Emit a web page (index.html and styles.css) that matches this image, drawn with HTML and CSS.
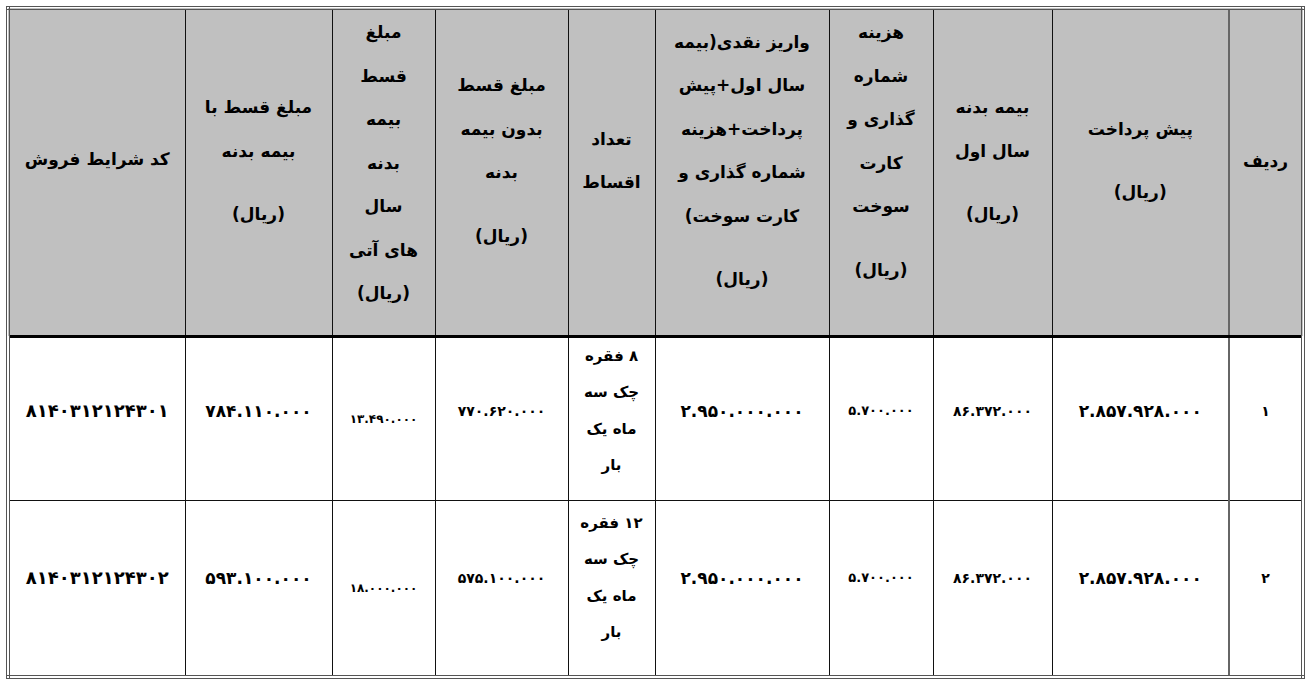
FILE: index.html
```html
<!DOCTYPE html>
<html lang="fa" dir="rtl">
<head>
<meta charset="utf-8">
<title>شرایط فروش</title>
<link rel="stylesheet" href="styles.css">
</head>
<body>
<table class="sales">
  <colgroup>
    <col class="c-radif">
    <col class="c-pish">
    <col class="c-bime">
    <col class="c-hazine">
    <col class="c-variz">
    <col class="c-tedad">
    <col class="c-bedun">
    <col class="c-ati">
    <col class="c-ba">
    <col class="c-kod">
  </colgroup>
  <thead>
    <tr class="head-row">
      <th class="radif">ردیف</th>
      <th>پیش پرداخت<span class="unit">(ریال)</span></th>
      <th>بیمه بدنه<br>سال اول<span class="unit">(ریال)</span></th>
      <th class="top">هزینه<br>شماره<br>گذاری و<br>کارت<br>سوخت<span class="unit">(ریال)</span></th>
      <th>واریز نقدی(بیمه<br>سال اول+پیش<br>پرداخت+هزینه<br>شماره گذاری و<br>کارت سوخت)<span class="unit">(ریال)</span></th>
      <th>تعداد<br>اقساط</th>
      <th>مبلغ قسط<br>بدون بیمه<br>بدنه<span class="unit">(ریال)</span></th>
      <th class="top">مبلغ<br>قسط<br>بیمه<br>بدنه<br>سال<br>های آتی<br>(ریال)</th>
      <th>مبلغ قسط با<br>بیمه بدنه<span class="unit">(ریال)</span></th>
      <th class="kod">کد شرایط فروش</th>
    </tr>
  </thead>
  <tbody>
    <tr class="row1">
      <td class="radif n-md">۱</td>
      <td class="n-lg">۲.۸۵۷.۹۲۸.۰۰۰</td>
      <td class="n-md">۸۶.۳۷۲.۰۰۰</td>
      <td class="n-sm">۵.۷۰۰.۰۰۰</td>
      <td class="n-lg">۲.۹۵۰.۰۰۰.۰۰۰</td>
      <td class="txt">۸ فقره<br>چک سه<br>ماه یک<br>بار</td>
      <td class="n-md">۷۷۰.۶۲۰.۰۰۰</td>
      <td class="n-xs">۱۳.۴۹۰.۰۰۰</td>
      <td class="n-lg">۷۸۴.۱۱۰.۰۰۰</td>
      <td class="n-kod">۸۱۴۰۳۱۲۱۲۴۳۰۱</td>
    </tr>
    <tr class="row2">
      <td class="radif n-md">۲</td>
      <td class="n-lg">۲.۸۵۷.۹۲۸.۰۰۰</td>
      <td class="n-md">۸۶.۳۷۲.۰۰۰</td>
      <td class="n-sm">۵.۷۰۰.۰۰۰</td>
      <td class="n-lg">۲.۹۵۰.۰۰۰.۰۰۰</td>
      <td class="txt">۱۲ فقره<br>چک سه<br>ماه یک<br>بار</td>
      <td class="n-md">۵۷۵.۱۰۰.۰۰۰</td>
      <td class="n-xs">۱۸.۰۰۰.۰۰۰</td>
      <td class="n-lg">۵۹۳.۱۰۰.۰۰۰</td>
      <td class="n-kod">۸۱۴۰۳۱۲۱۲۴۳۰۲</td>
    </tr>
  </tbody>
</table>
</body>
</html>
```
FILE: styles.css
```css
html, body {
  margin: 0;
  padding: 0;
  background: #ffffff;
}
body {
  padding: 6px 2px 6px 6px;
  font-family: "DejaVu Sans", "Noto Sans", sans-serif;
  color: #000;
}
.sales {
  border-collapse: collapse;
  table-layout: fixed;
  width: 1299px;
  border: 4px double #555;
}
.c-radif { width: 74px; }
.c-pish { width: 177px; }
.c-bime { width: 119px; }
.c-hazine { width: 104px; }
.c-variz { width: 174px; }
.c-tedad { width: 87px; }
.c-bedun { width: 133px; }
.c-ati { width: 103px; }
.c-ba { width: 147px; }
.c-kod { width: 177px; }

.sales th, .sales td {
  border: 1px solid #111;
  text-align: center;
  white-space: nowrap;
  padding: 0;
}
.sales th {
  background: #c0c0c0;
  font-weight: bold;
  font-size: 17px;
  line-height: 43.5px;
  vertical-align: middle;
  padding-bottom: 22px;
  border-bottom: 3px solid #000;
}
.sales th.top {
  vertical-align: top;
  padding-top: 1px;
  padding-bottom: 0;
}
.sales th.kod { padding-bottom: 26px; }
.unit {
  display: block;
  margin-top: 20px;
}
.head-row { height: 328px; }
.row1 { height: 164px; }
.row2 { height: 177px; }
.sales .radif { border-left: 2px solid #666; }

.sales td {
  vertical-align: middle;
  font-weight: bold;
  padding-bottom: 16px;
}
.sales .row2 td { padding-bottom: 20px; }
.sales td.n-kod { font-size: 18px; }
.sales td.n-lg { font-size: 17px; }
.sales td.n-md { font-size: 14px; }
.sales td.n-sm { font-size: 13px; }
.sales td.n-xs { font-size: 12px; padding-bottom: 0; }
.sales .row2 td.n-xs { padding-bottom: 0; }
.sales td.txt {
  font-size: 15px;
  line-height: 36.5px;
}
```
